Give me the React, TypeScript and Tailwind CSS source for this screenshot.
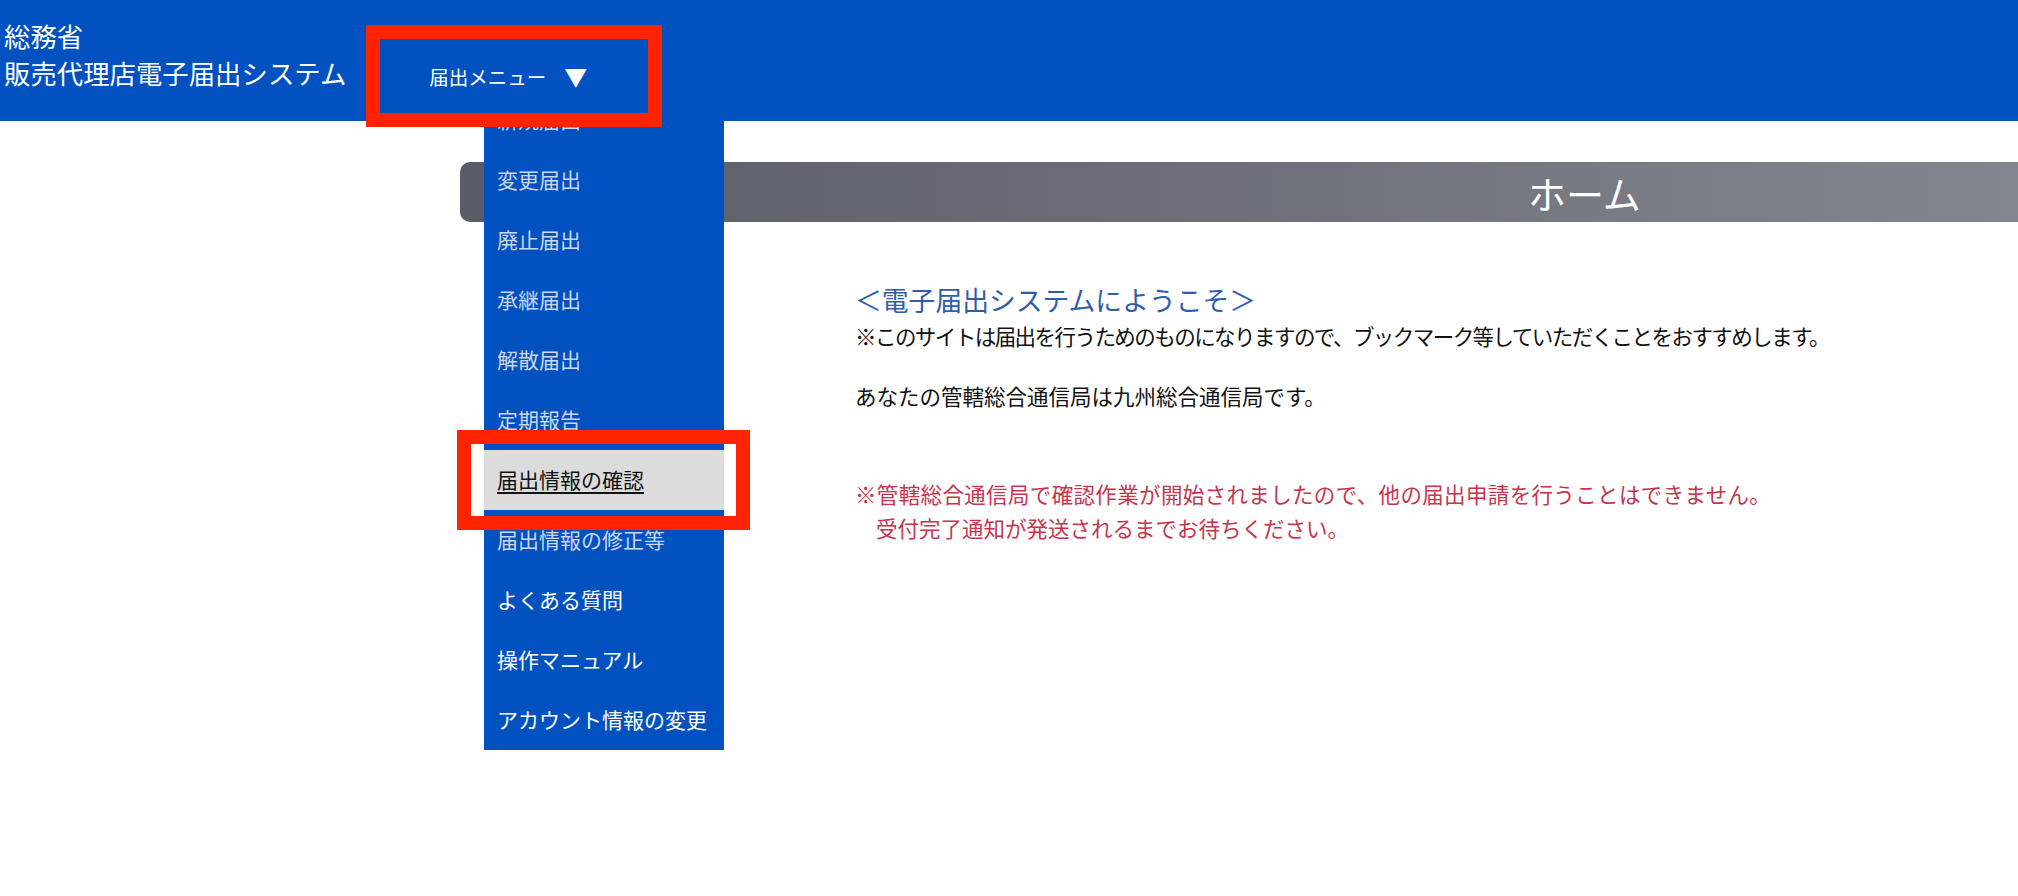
import { useState } from 'react';

type MenuItem = { label: string; enabled: boolean };

const menuItems: MenuItem[] = [
  { label: '新規届出', enabled: false },
  { label: '変更届出', enabled: false },
  { label: '廃止届出', enabled: false },
  { label: '承継届出', enabled: false },
  { label: '解散届出', enabled: false },
  { label: '定期報告', enabled: false },
  { label: '届出情報の確認', enabled: true },
  { label: '届出情報の修正等', enabled: false },
  { label: 'よくある質問', enabled: true },
  { label: '操作マニュアル', enabled: true },
  { label: 'アカウント情報の変更', enabled: true },
];

function Header({ onToggle }: { onToggle: () => void }) {
  return (
    <header className="relative z-20 flex h-[121px] items-start bg-[#0151c0] text-white">
      <div className="pl-[4px] pt-[17px] text-[26.4px] leading-[37px]">
        <div>総務省</div>
        <div>販売代理店電子届出システム</div>
      </div>
      <button
        type="button"
        onClick={onToggle}
        className="ml-[33px] mt-[40px] flex h-[73px] w-[268px] items-center pl-[50px] text-white"
      >
        <span className="text-[19.5px]">届出メニュー</span>
        <span className="ml-[18px] text-[23px]">▼</span>
      </button>
    </header>
  );
}

function DropdownMenu({ active }: { active: string }) {
  return (
    <nav className="absolute left-[484px] top-[90px] z-10 w-[240px] bg-[#0151c0]">
      {menuItems.map((item) => {
        const selected = item.label === active;
        return (
          <a
            key={item.label}
            href="#"
            className={
              selected
                ? 'flex h-[60px] items-center bg-[#dcdcdc] pl-[13px] text-[21px] text-[#111] underline underline-offset-4'
                : item.enabled
                  ? 'flex h-[60px] items-center pl-[13px] text-[21px] text-white'
                  : 'flex h-[60px] items-center pl-[13px] text-[21px] text-[#cbd5ec]'
            }
          >
            {item.label}
          </a>
        );
      })}
    </nav>
  );
}

export default function App() {
  const [open, setOpen] = useState(true);

  return (
    <div className="relative min-h-[896px] overflow-hidden bg-white font-['Noto_Sans_CJK_JP',sans-serif]">
      <Header onToggle={() => setOpen(!open)} />
      {open && <DropdownMenu active="届出情報の確認" />}

      <main className="ml-[460px] pt-[41px]">
        {/* page title bar */}
        <div className="flex h-[60px] items-center rounded-l-[10px] bg-gradient-to-r from-[#5b5a67] to-[#85858f] pl-[1068px] text-[38px] text-white">
          ホーム
        </div>

        <section className="ml-[395px] pt-[59px]">
          <h2 className="text-[26.8px] leading-[38px] text-[#2f5ea8]">＜電子届出システムにようこそ＞</h2>
          <p className="text-[21.5px] leading-[34px] tracking-[-1.55px] text-[#111]">
            ※このサイトは届出を行うためのものになりますので、ブックマーク等していただくことをおすすめします。
          </p>
          <p className="mt-[26px] text-[21.5px] leading-[34px] text-[#111]">
            あなたの管轄総合通信局は九州総合通信局です。
          </p>
          <div className="mt-[64px] text-[21.5px] leading-[34px] text-[#c8344e]">
            <p className="tracking-[0.35px]">※管轄総合通信局で確認作業が開始されましたので、他の届出申請を行うことはできません。</p>
            <p className="pl-[21px]">受付完了通知が発送されるまでお待ちください。</p>
          </div>
        </section>
      </main>

      {/* highlight frames */}
      <div className="pointer-events-none absolute left-[366px] top-[25px] z-30 h-[102px] w-[296px] border-[14px] border-[#ff2300]" />
      <div className="pointer-events-none absolute left-[457px] top-[430px] z-30 h-[100px] w-[293px] border-[14px] border-[#ff2300]" />
    </div>
  );
}
